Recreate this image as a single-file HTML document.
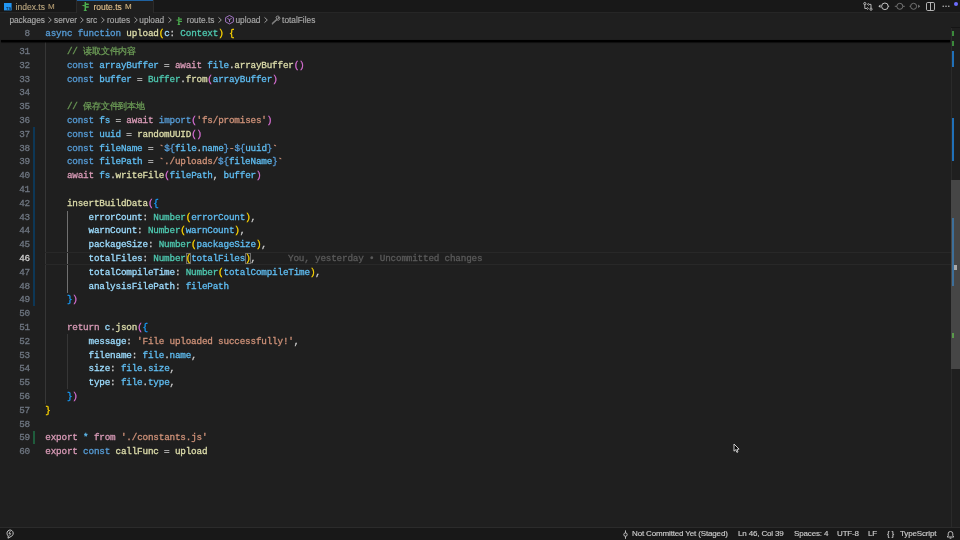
<!DOCTYPE html>
<html><head><meta charset="utf-8">
<style>
*{margin:0;padding:0;box-sizing:border-box}
html,body{width:960px;height:540px;overflow:hidden;background:#1f1f1f}
body{position:relative;font-family:"Liberation Sans",sans-serif;color:#cccccc}
.abs{position:absolute}
svg{position:absolute;overflow:visible}
#tabs{position:absolute;left:0;top:0;width:960px;height:12px;background:#181818}
.tab{position:absolute;top:0;height:12px;font-size:8.5px;line-height:12px;white-space:nowrap;-webkit-text-stroke:0.12px currentColor}
#tab1{left:0;width:77px;border-right:1px solid #2b2b2b;color:#b9a57f}
#tab2{left:76px;width:78px;background:#1f1f1f;border-right:1px solid #2b2b2b;border-left:1px solid #2b2b2b;height:13px;color:#e2c08d}
#tab2:before{content:"";position:absolute;left:0;top:0;right:0;height:1px;background:#1f62a0}
#crumbs{position:absolute;left:0;top:13px;width:960px;height:15px;font-size:8.3px;line-height:15px;color:#a9a9a9;white-space:nowrap;-webkit-text-stroke:0.15px #a9a9a9}
#crumbs svg{margin-top:-13px}
.mono{font-family:"Liberation Mono",sans-serif;font-size:9.3px;letter-spacing:-0.18px;white-space:pre;-webkit-text-stroke:0.3px}
.ln{position:absolute;left:0;width:30px;text-align:right;height:13.8px;line-height:13.8px;color:#6e7681;-webkit-text-stroke-color:#6e7681}
.ln.act{color:#cccccc;-webkit-text-stroke-color:#cccccc}
.cl{position:absolute;left:45.3px;height:13.8px;line-height:13.8px}
.cl span{-webkit-text-stroke-color:currentColor}
.bx{box-shadow:inset 0 0 0 1px #6e6e6e}
#sticky{position:absolute;left:0;top:26.6px;width:950px;height:13.8px;background:#1f1f1f;z-index:5}
#sticky:after{content:"";position:absolute;left:1px;right:0;top:13.4px;height:1.6px;background:#000;box-shadow:0 0.5px 1px #000}
#status{position:absolute;left:0;top:527px;width:960px;height:13px;background:#181818;border-top:1px solid #2b2b2b;font-size:8px;line-height:12px;color:#cccccc;white-space:nowrap;letter-spacing:-0.15px;-webkit-text-stroke:0.15px #cccccc}
.st{position:absolute;top:0.3px}
.guide{position:absolute;width:1px;background:#363636}
.gut{position:absolute;left:33px;width:2px}
#ruler{position:absolute;left:951px;top:26.6px;width:9px;height:500.4px;border-left:1px solid #2a2a2a}
#root{position:absolute;left:0;top:0;width:960px;height:540px;will-change:transform}
</style></head><body><div id="root">
<div id="tabs">
  <div class="abs" style="left:0;top:11.5px;width:960px;height:1px;background:#262626"></div>
  <div class="tab" id="tab1">
    <svg style="left:4px;top:2.7px" width="8" height="7.5" viewBox="0 0 8 7.5"><rect x="0" y="0" width="7.6" height="7.4" fill="#2196f3"/><text x="7.2" y="7" font-size="4" font-family="Liberation Sans" font-weight="bold" text-anchor="end" fill="#0a2a4a">TS</text></svg>
    <span class="abs" style="left:15.6px;top:0.8px">index.ts</span>
    <span class="abs" style="left:48px;top:0.8px;font-size:8px;color:#b59d72">M</span>
  </div>
  <div class="tab" id="tab2">
    <svg style="left:4px;top:2px" width="9" height="9" viewBox="0 0 9 9"><g fill="#4caf50"><rect x="3.6" y="0" width="1.4" height="8.6"/><polygon points="0.5,3.5 3.8,2.8 3.8,4.4"/><rect x="4.5" y="1.6" width="3.4" height="1.4" rx="0.6"/><rect x="4.5" y="4.3" width="3.4" height="1.4" rx="0.6"/><polygon points="2.4,9 6.2,9 4.3,7"/></g></svg>
    <span class="abs" style="left:16.4px;top:0.8px">route.ts</span>
    <span class="abs" style="left:48px;top:0.8px;font-size:8px;color:#d4b683">M</span>
  </div>
  <!-- top right actions -->
  <svg style="left:863px;top:2px" width="10" height="9" viewBox="0 0 10 9" fill="none" stroke="#c5c5c5" stroke-width="0.9"><circle cx="1.8" cy="1.6" r="1.1"/><path d="M1.8 2.7 V6.5 H4.2"/><path d="M4.2 5.3 l1.2 1.2 l-1.2 1.2"/><circle cx="8" cy="7.2" r="1.1"/><path d="M8 6.1 V2.4 H5.6"/><path d="M5.6 1.2 l-1.2 1.2 l1.2 1.2"/></svg>
  <svg style="left:878px;top:2px" width="12" height="9" viewBox="0 0 12 9"><polygon points="0.4,4.3 2.5,2.5 2.5,6.1" fill="#c5c5c5"/><circle cx="6.9" cy="4.3" r="3.3" fill="none" stroke="#c5c5c5" stroke-width="1"/><path d="M9.9 4.3 H11.2" stroke="#c5c5c5" stroke-width="0.9"/></svg>
  <svg style="left:894px;top:2px" width="12" height="9" viewBox="0 0 12 9" fill="none" stroke="#7a7a7a" stroke-width="0.9"><circle cx="5.8" cy="4.3" r="3"/><path d="M0.8 4.3 H2.8 M8.8 4.3 H10.8"/></svg>
  <svg style="left:909px;top:2px" width="12" height="9" viewBox="0 0 12 9"><path d="M0.5 4.3 H1.8" stroke="#7a7a7a" stroke-width="0.9"/><circle cx="4.6" cy="4.3" r="3" fill="none" stroke="#7a7a7a" stroke-width="0.9"/><polygon points="11.2,4.3 9.1,2.5 9.1,6.1" fill="#7a7a7a"/></svg>
  <svg style="left:926px;top:2px" width="9" height="9" viewBox="0 0 9 9" fill="none" stroke="#c5c5c5" stroke-width="0.9"><rect x="0.5" y="0.5" width="8" height="8" rx="1.2"/><path d="M4.5 0.5 V8.5"/></svg>
  <svg style="left:942px;top:5px" width="8" height="3" viewBox="0 0 8 3" fill="#c5c5c5"><circle cx="1.2" cy="1.3" r="0.75"/><circle cx="4" cy="1.3" r="0.75"/><circle cx="6.8" cy="1.3" r="0.75"/></svg>
  <div class="abs" style="left:953.8px;top:1.8px;width:4.4px;height:4.4px;border-radius:50%;background:#6d6dff"></div>
</div>
<div id="crumbs">
  <span class="abs" style="left:9.4px">packages</span>
  <span class="abs" style="left:54.0px">server</span>
  <span class="abs" style="left:86.2px">src</span>
  <span class="abs" style="left:107.0px">routes</span>
  <span class="abs" style="left:139.3px">upload</span>
  <span class="abs" style="left:186.7px">route.ts</span>
  <span class="abs" style="left:235.5px">upload</span>
  <span class="abs" style="left:282.1px">totalFiles</span>
  <svg style="left:47.7px;top:17.3px" width="4" height="6" viewBox="0 0 4 6"><path d="M0.5 0.4 L3.3 3 L0.5 5.6" fill="none" stroke="#a9a9a9" stroke-width="0.9"/></svg>
  <svg style="left:80.2px;top:17.3px" width="4" height="6" viewBox="0 0 4 6"><path d="M0.5 0.4 L3.3 3 L0.5 5.6" fill="none" stroke="#a9a9a9" stroke-width="0.9"/></svg>
  <svg style="left:100.7px;top:17.3px" width="4" height="6" viewBox="0 0 4 6"><path d="M0.5 0.4 L3.3 3 L0.5 5.6" fill="none" stroke="#a9a9a9" stroke-width="0.9"/></svg>
  <svg style="left:133.5px;top:17.3px" width="4" height="6" viewBox="0 0 4 6"><path d="M0.5 0.4 L3.3 3 L0.5 5.6" fill="none" stroke="#a9a9a9" stroke-width="0.9"/></svg>
  <svg style="left:167.9px;top:17.3px" width="4" height="6" viewBox="0 0 4 6"><path d="M0.5 0.4 L3.3 3 L0.5 5.6" fill="none" stroke="#a9a9a9" stroke-width="0.9"/></svg>
  <svg style="left:218.3px;top:17.3px" width="4" height="6" viewBox="0 0 4 6"><path d="M0.5 0.4 L3.3 3 L0.5 5.6" fill="none" stroke="#a9a9a9" stroke-width="0.9"/></svg>
  <svg style="left:264.2px;top:17.3px" width="4" height="6" viewBox="0 0 4 6"><path d="M0.5 0.4 L3.3 3 L0.5 5.6" fill="none" stroke="#a9a9a9" stroke-width="0.9"/></svg>
  <svg style="left:175px;top:16.5px" width="8" height="8" viewBox="0 0 9 9"><g fill="#4caf50"><rect x="3.6" y="0" width="1.4" height="8.6"/><polygon points="0.5,3.5 3.8,2.8 3.8,4.4"/><rect x="4.5" y="1.6" width="3.4" height="1.4" rx="0.6"/><rect x="4.5" y="4.3" width="3.4" height="1.4" rx="0.6"/><polygon points="2.4,9 6.2,9 4.3,7"/></g></svg>
  <svg style="left:225px;top:15.3px" width="9" height="9.4" viewBox="0 0 9 9.4" fill="none" stroke="#b180d7" stroke-width="0.9"><path d="M4.5 0.5 L8.4 2.6 V6.8 L4.5 8.9 L0.6 6.8 V2.6 Z"/><path d="M2.4 3.4 L4.5 4.6 L6.6 3.4 M4.5 4.6 V7"/></svg>
  <svg style="left:271px;top:15.5px" width="9" height="8.5" viewBox="0 0 9 8.5" fill="none" stroke="#a9a9a9" stroke-width="0.85"><path d="M5.6 3.2 L0.9 7.6 L1.4 8 L6.1 3.7"/><path d="M5 1.2 A1.9 1.9 0 0 1 8.2 0.8 L6.8 2 L7.3 2.6 L8.6 1.4 A1.9 1.9 0 0 1 6.5 4.2 Z"/></svg>
</div>

<div id="editor" class="mono">
<div class="guide" style="left:45px;top:41px;height:362.7px"></div>
<div class="guide" style="left:67px;top:210.6px;height:82.4px;background:#707070"></div>
<div class="guide" style="left:67px;top:334px;height:55px"></div>
<div class="gut" style="top:126.5px;height:179.5px;background:#0d3756"></div>
<div class="gut" style="top:430.5px;height:13.5px;background:#1f5c3c"></div>
<div class="abs" style="left:45px;top:251.5px;width:906px;height:13.8px;border-top:1px solid #282828;border-bottom:1px solid #282828"></div>
<div class="ln" style="top:44.90px">31</div>
<div class="ln" style="top:58.70px">32</div>
<div class="ln" style="top:72.50px">33</div>
<div class="ln" style="top:86.30px">34</div>
<div class="ln" style="top:100.10px">35</div>
<div class="ln" style="top:113.90px">36</div>
<div class="ln" style="top:127.70px">37</div>
<div class="ln" style="top:141.50px">38</div>
<div class="ln" style="top:155.30px">39</div>
<div class="ln" style="top:169.10px">40</div>
<div class="ln" style="top:182.90px">41</div>
<div class="ln" style="top:196.70px">42</div>
<div class="ln" style="top:210.50px">43</div>
<div class="ln" style="top:224.30px">44</div>
<div class="ln" style="top:238.10px">45</div>
<div class="ln act" style="top:251.90px">46</div>
<div class="ln" style="top:265.70px">47</div>
<div class="ln" style="top:279.50px">48</div>
<div class="ln" style="top:293.30px">49</div>
<div class="ln" style="top:307.10px">50</div>
<div class="ln" style="top:320.90px">51</div>
<div class="ln" style="top:334.70px">52</div>
<div class="ln" style="top:348.50px">53</div>
<div class="ln" style="top:362.30px">54</div>
<div class="ln" style="top:376.10px">55</div>
<div class="ln" style="top:389.90px">56</div>
<div class="ln" style="top:403.70px">57</div>
<div class="ln" style="top:417.50px">58</div>
<div class="ln" style="top:431.30px">59</div>
<div class="ln" style="top:445.10px">60</div>
<div class="cl" style="top:44.90px"><span style="color:#cccccc">    </span><span style="color:#6a9955">// 读取文件内容</span></div>
<div class="cl" style="top:58.70px"><span style="color:#cccccc">    </span><span style="color:#569cd6">const</span><span style="color:#cccccc"> </span><span style="color:#5fbdf2">arrayBuffer</span><span style="color:#cccccc"> = </span><span style="color:#d89ab6">await</span><span style="color:#cccccc"> </span><span style="color:#5fbdf2">file</span><span style="color:#cccccc">.</span><span style="color:#dcdcaa">arrayBuffer</span><span style="color:#da70d6">()</span></div>
<div class="cl" style="top:72.50px"><span style="color:#cccccc">    </span><span style="color:#569cd6">const</span><span style="color:#cccccc"> </span><span style="color:#5fbdf2">buffer</span><span style="color:#cccccc"> = </span><span style="color:#4ec9b0">Buffer</span><span style="color:#cccccc">.</span><span style="color:#dcdcaa">from</span><span style="color:#da70d6">(</span><span style="color:#5fbdf2">arrayBuffer</span><span style="color:#da70d6">)</span></div>
<div class="cl" style="top:100.10px"><span style="color:#cccccc">    </span><span style="color:#6a9955">// 保存文件到本地</span></div>
<div class="cl" style="top:113.90px"><span style="color:#cccccc">    </span><span style="color:#569cd6">const</span><span style="color:#cccccc"> </span><span style="color:#5fbdf2">fs</span><span style="color:#cccccc"> = </span><span style="color:#d89ab6">await</span><span style="color:#cccccc"> </span><span style="color:#569cd6">import</span><span style="color:#da70d6">(</span><span style="color:#ce9178">&#x27;fs/promises&#x27;</span><span style="color:#da70d6">)</span></div>
<div class="cl" style="top:127.70px"><span style="color:#cccccc">    </span><span style="color:#569cd6">const</span><span style="color:#cccccc"> </span><span style="color:#5fbdf2">uuid</span><span style="color:#cccccc"> = </span><span style="color:#dcdcaa">randomUUID</span><span style="color:#da70d6">()</span></div>
<div class="cl" style="top:141.50px"><span style="color:#cccccc">    </span><span style="color:#569cd6">const</span><span style="color:#cccccc"> </span><span style="color:#5fbdf2">fileName</span><span style="color:#cccccc"> = </span><span style="color:#ce9178">`</span><span style="color:#569cd6">${</span><span style="color:#5fbdf2">file</span><span style="color:#cccccc">.</span><span style="color:#5fbdf2">name</span><span style="color:#569cd6">}</span><span style="color:#ce9178">-</span><span style="color:#569cd6">${</span><span style="color:#5fbdf2">uuid</span><span style="color:#569cd6">}</span><span style="color:#ce9178">`</span></div>
<div class="cl" style="top:155.30px"><span style="color:#cccccc">    </span><span style="color:#569cd6">const</span><span style="color:#cccccc"> </span><span style="color:#5fbdf2">filePath</span><span style="color:#cccccc"> = </span><span style="color:#ce9178">`./uploads/</span><span style="color:#569cd6">${</span><span style="color:#5fbdf2">fileName</span><span style="color:#569cd6">}</span><span style="color:#ce9178">`</span></div>
<div class="cl" style="top:169.10px"><span style="color:#cccccc">    </span><span style="color:#d89ab6">await</span><span style="color:#cccccc"> </span><span style="color:#5fbdf2">fs</span><span style="color:#cccccc">.</span><span style="color:#dcdcaa">writeFile</span><span style="color:#da70d6">(</span><span style="color:#5fbdf2">filePath</span><span style="color:#cccccc">, </span><span style="color:#5fbdf2">buffer</span><span style="color:#da70d6">)</span></div>
<div class="cl" style="top:196.70px"><span style="color:#cccccc">    </span><span style="color:#dcdcaa">insertBuildData</span><span style="color:#da70d6">(</span><span style="color:#179fff">{</span></div>
<div class="cl" style="top:210.50px"><span style="color:#cccccc">        </span><span style="color:#9cdcfe">errorCount</span><span style="color:#cccccc">: </span><span style="color:#4ec9b0">Number</span><span style="color:#ffd700">(</span><span style="color:#5fbdf2">errorCount</span><span style="color:#ffd700">)</span><span style="color:#cccccc">,</span></div>
<div class="cl" style="top:224.30px"><span style="color:#cccccc">        </span><span style="color:#9cdcfe">warnCount</span><span style="color:#cccccc">: </span><span style="color:#4ec9b0">Number</span><span style="color:#ffd700">(</span><span style="color:#5fbdf2">warnCount</span><span style="color:#ffd700">)</span><span style="color:#cccccc">,</span></div>
<div class="cl" style="top:238.10px"><span style="color:#cccccc">        </span><span style="color:#9cdcfe">packageSize</span><span style="color:#cccccc">: </span><span style="color:#4ec9b0">Number</span><span style="color:#ffd700">(</span><span style="color:#5fbdf2">packageSize</span><span style="color:#ffd700">)</span><span style="color:#cccccc">,</span></div>
<div class="cl" style="top:251.90px"><span style="color:#cccccc">        </span><span style="color:#9cdcfe">totalFiles</span><span style="color:#cccccc">: </span><span style="color:#4ec9b0">Number</span><span style="color:#ffd700" class="bx">(</span><span style="color:#5fbdf2">totalFiles</span><span style="color:#ffd700" class="bx">)</span><span style="color:#cccccc">,</span></div>
<div class="cl" style="top:265.70px"><span style="color:#cccccc">        </span><span style="color:#9cdcfe">totalCompileTime</span><span style="color:#cccccc">: </span><span style="color:#4ec9b0">Number</span><span style="color:#ffd700">(</span><span style="color:#5fbdf2">totalCompileTime</span><span style="color:#ffd700">)</span><span style="color:#cccccc">,</span></div>
<div class="cl" style="top:279.50px"><span style="color:#cccccc">        </span><span style="color:#9cdcfe">analysisFilePath</span><span style="color:#cccccc">: </span><span style="color:#5fbdf2">filePath</span></div>
<div class="cl" style="top:293.30px"><span style="color:#cccccc">    </span><span style="color:#179fff">}</span><span style="color:#da70d6">)</span></div>
<div class="cl" style="top:320.90px"><span style="color:#cccccc">    </span><span style="color:#d89ab6">return</span><span style="color:#cccccc"> </span><span style="color:#9cdcfe">c</span><span style="color:#cccccc">.</span><span style="color:#dcdcaa">json</span><span style="color:#da70d6">(</span><span style="color:#179fff">{</span></div>
<div class="cl" style="top:334.70px"><span style="color:#cccccc">        </span><span style="color:#9cdcfe">message</span><span style="color:#cccccc">: </span><span style="color:#ce9178">&#x27;File uploaded successfully!&#x27;</span><span style="color:#cccccc">,</span></div>
<div class="cl" style="top:348.50px"><span style="color:#cccccc">        </span><span style="color:#9cdcfe">filename</span><span style="color:#cccccc">: </span><span style="color:#5fbdf2">file</span><span style="color:#cccccc">.</span><span style="color:#5fbdf2">name</span><span style="color:#cccccc">,</span></div>
<div class="cl" style="top:362.30px"><span style="color:#cccccc">        </span><span style="color:#9cdcfe">size</span><span style="color:#cccccc">: </span><span style="color:#5fbdf2">file</span><span style="color:#cccccc">.</span><span style="color:#5fbdf2">size</span><span style="color:#cccccc">,</span></div>
<div class="cl" style="top:376.10px"><span style="color:#cccccc">        </span><span style="color:#9cdcfe">type</span><span style="color:#cccccc">: </span><span style="color:#5fbdf2">file</span><span style="color:#cccccc">.</span><span style="color:#5fbdf2">type</span><span style="color:#cccccc">,</span></div>
<div class="cl" style="top:389.90px"><span style="color:#cccccc">    </span><span style="color:#179fff">}</span><span style="color:#da70d6">)</span></div>
<div class="cl" style="top:403.70px"><span style="color:#ffd700">}</span></div>
<div class="cl" style="top:431.30px"><span style="color:#d89ab6">export</span><span style="color:#cccccc"> </span><span style="color:#5fbdf2">*</span><span style="color:#cccccc"> </span><span style="color:#d89ab6">from</span><span style="color:#cccccc"> </span><span style="color:#ce9178">&#x27;./constants.js&#x27;</span></div>
<div class="cl" style="top:445.10px"><span style="color:#d89ab6">export</span><span style="color:#cccccc"> </span><span style="color:#569cd6">const</span><span style="color:#cccccc"> </span><span style="color:#dcdcaa">callFunc</span><span style="color:#cccccc"> = </span><span style="color:#dcdcaa">upload</span></div>
<div class="abs" style="top:251.90px;height:13.8px;line-height:13.8px;color:#5a5a5a;-webkit-text-stroke-color:#5a5a5a;left:288px">You, yesterday • Uncommitted changes</div>
</div>
<div id="sticky" class="mono">
  <div class="ln" style="top:0">8</div>
  <div class="cl" style="top:0.5px"><span style="color:#569cd6">async</span><span style="color:#cccccc"> </span><span style="color:#569cd6">function</span><span style="color:#cccccc"> </span><span style="color:#dcdcaa">upload</span><span style="color:#ffd700">(</span><span style="color:#9cdcfe">c</span><span style="color:#cccccc">: </span><span style="color:#4ec9b0">Context</span><span style="color:#ffd700">)</span><span style="color:#cccccc"> </span><span style="color:#ffd700">{</span></div>
</div>

<div id="ruler">
  <div class="abs" style="left:-1px;top:0;width:10px;height:1px;background:#151515"></div>
  <div class="abs" style="left:-1px;top:153.4px;width:10px;height:188.9px;background:#464646"></div>
  <div class="abs" style="left:-0.2px;top:4.1px;width:2.6px;height:5.2px;background:#3b8a3b"></div>
  <div class="abs" style="left:-0.2px;top:14.1px;width:2.6px;height:5.5px;background:#3b8a3b"></div>
  <div class="abs" style="left:-0.2px;top:24.4px;width:2.6px;height:16px;background:#2070b8"></div>
  <div class="abs" style="left:-0.2px;top:91.9px;width:2.6px;height:42.5px;background:#2070b8"></div>
  <div class="abs" style="left:-0.2px;top:191.2px;width:2.6px;height:67.9px;background:#3d6f9a"></div>
  <div class="abs" style="left:-0.2px;top:306.2px;width:2.6px;height:5.2px;background:#5a9a4a"></div>
  <div class="abs" style="left:2px;top:238.4px;width:3.3px;height:5px;background:#a8a8a8"></div>
</div>

<div id="status">
  <svg style="left:5.5px;top:1.2px" width="8" height="10" viewBox="0 0 8 10" fill="none" stroke="#cccccc" stroke-width="0.95" stroke-linejoin="round"><path d="M2 9.2 L2.3 7 A3.1 3.3 0 1 1 5.2 7.4 Z"/><path d="M4.6 1.8 L2.9 4.6 H4.7 L3.5 6.6" stroke-width="0.8"/></svg>
  <svg style="left:621px;top:1.5px" width="9" height="9" viewBox="0 0 9 9" fill="none" stroke="#cccccc" stroke-width="0.9"><circle cx="4.5" cy="4.6" r="1.7"/><path d="M4.5 0.4 V2.9 M4.5 6.3 V8.8"/></svg>
  <span class="st" style="left:632px">Not Committed Yet (Staged)</span>
  <span class="st" style="left:738px">Ln 46, Col 39</span>
  <span class="st" style="left:794px">Spaces: 4</span>
  <span class="st" style="left:837px">UTF-8</span>
  <span class="st" style="left:868px">LF</span>
  <span class="st" style="left:887px">{ }</span>
  <span class="st" style="left:900px">TypeScript</span>
  <svg style="left:946px;top:1.5px" width="9" height="9" viewBox="0 0 9 9" fill="none" stroke="#cccccc" stroke-width="0.9"><path d="M1.2 7 H7.8 L6.8 5.6 V3.8 A2.3 2.3 0 0 0 2.2 3.8 V5.6 Z"/><path d="M3.6 8.2 H5.4"/></svg>
</div>
<svg style="left:733.3px;top:443px" width="8" height="11" viewBox="0 0 8 11"><path d="M1 1 L1 8.2 L2.7 6.7 L3.9 9.4 L5 8.9 L3.9 6.3 L6.1 6.1 Z" fill="#000" stroke="#e0e0e0" stroke-width="0.9" stroke-linejoin="round"/></svg>
</div></body></html>
